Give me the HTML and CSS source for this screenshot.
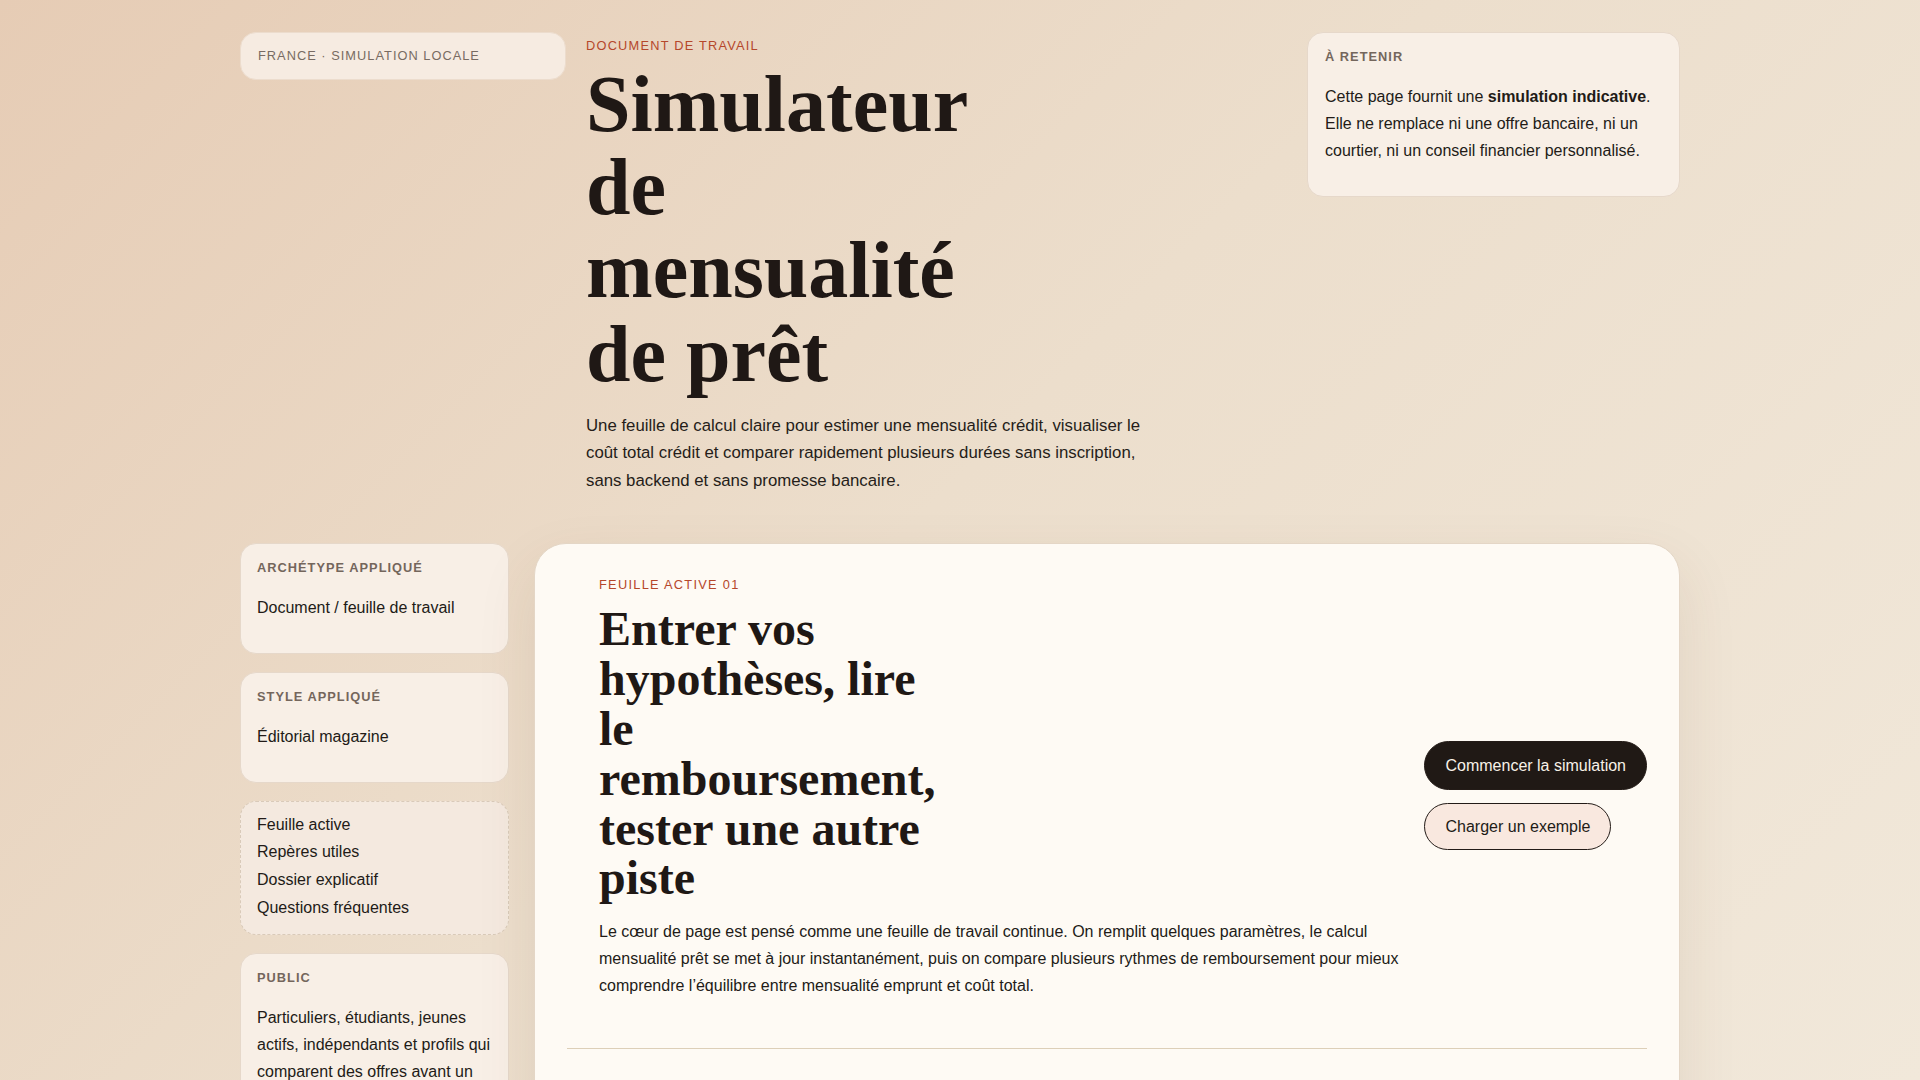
FILE: index.html
```html
<!DOCTYPE html>
<html lang="fr">
<head>
<meta charset="utf-8">
<title>Simulateur de mensualité de prêt</title>
<link rel="stylesheet" href="styles.css">
</head>
<body>
<div class="page">
  <header class="hero">
    <div class="locale-pill">France · Simulation locale</div>
    <div class="hero-main">
      <p class="eyebrow">Document de travail</p>
      <h1 class="hero-title">Simulateur de mensualité de prêt</h1>
      <p class="lede">Une feuille de calcul claire pour estimer une mensualité crédit, visualiser le coût total crédit et comparer rapidement plusieurs durées sans inscription, sans backend et sans promesse bancaire.</p>
    </div>
    <aside class="card note-card">
      <p class="card-label">À retenir</p>
      <p class="card-text">Cette page fournit une <strong>simulation indicative</strong>. Elle ne remplace ni une offre bancaire, ni un courtier, ni un conseil financier personnalisé.</p>
    </aside>
  </header>

  <div class="layout">
    <aside class="sidebar">
      <div class="card">
        <p class="card-label">Archétype appliqué</p>
        <p class="card-text">Document / feuille de travail</p>
      </div>
      <div class="card">
        <p class="card-label">Style appliqué</p>
        <p class="card-text">Éditorial magazine</p>
      </div>
      <nav class="card nav-card">
        <a href="#feuille">Feuille active</a>
        <a href="#reperes">Repères utiles</a>
        <a href="#dossier">Dossier explicatif</a>
        <a href="#faq">Questions fréquentes</a>
      </nav>
      <div class="card">
        <p class="card-label">Public</p>
        <p class="card-text">Particuliers, étudiants, jeunes actifs, indépendants et profils qui comparent des offres avant un rendez-vous bancaire.</p>
      </div>
    </aside>

    <main class="sheet" id="feuille">
      <div class="sheet-head">
        <div class="sheet-intro">
          <p class="eyebrow sheet-eyebrow">Feuille active 01</p>
          <h2 class="sheet-title">Entrer vos hypothèses, lire le remboursement, tester une autre piste</h2>
          <p class="sheet-text">Le cœur de page est pensé comme une feuille de travail continue. On remplit quelques paramètres, le calcul mensualité prêt se met à jour instantanément, puis on compare plusieurs rythmes de remboursement pour mieux comprendre l’équilibre entre mensualité emprunt et coût total.</p>
        </div>
        <div class="actions">
          <button class="btn btn-primary" type="button">Commencer la simulation</button>
          <button class="btn btn-secondary" type="button">Charger un exemple</button>
        </div>
      </div>
      <div class="sheet-body">
        <div class="field">
          <span class="field-label">Montant emprunté</span>
          <span class="field-value">200 000 €</span>
        </div>
        <div class="field">
          <span class="field-label">Taux annuel</span>
          <span class="field-value">3,80 %</span>
        </div>
        <div class="field">
          <span class="field-label">Durée</span>
          <span class="field-value">20 ans</span>
        </div>
      </div>
    </main>
  </div>
</div>
</body>
</html>
```

FILE: styles.css
```css
* { box-sizing: border-box; }

html {
  min-height: 100%;
  background: linear-gradient(135deg, #e6ccb5 0%, #ecdecc 48%, #f1e8da 100%);
  background-attachment: fixed;
}

body {
  margin: 0;
  min-height: 100vh;
  font-family: "Liberation Sans", Arial, sans-serif;
  font-size: 16px;
  color: #221b17;
}

.page {
  max-width: 1440px;
  margin: 0 auto;
  padding: 32px 0 60px;
}

/* ---------- hero ---------- */
.hero {
  display: grid;
  grid-template-columns: 326px 1fr 373px;
  gap: 20px;
  align-items: start;
}

.locale-pill {
  background: #f6ebe1;
  border: 1px solid #ecdccd;
  border-radius: 16px;
  padding: 14px 17px;
  font-size: 12.8px;
  line-height: 18px;
  letter-spacing: 0.08em;
  text-transform: uppercase;
  color: #786b62;
}

.hero-main {
  padding-top: 4px;
}

.eyebrow {
  margin: 0 0 7px;
  font-size: 12.8px;
  line-height: 20px;
  letter-spacing: 0.095em;
  text-transform: uppercase;
  color: #b5472b;
}

.hero-title {
  margin: 0;
  max-width: 420px;
  font-family: "Liberation Serif", "Times New Roman", serif;
  font-weight: 700;
  font-size: 80px;
  line-height: 1.04;
  color: #1f1815;
}

.lede {
  margin: 16px 0 0;
  max-width: 36rem;
  font-size: 16.8px;
  line-height: 1.63;
  color: #251d19;
}

/* ---------- cards ---------- */
.card {
  background: #f8efe6;
  border: 1px solid #e6d8ca;
  border-radius: 16px;
  padding: 15px 16px 16px;
}

.note-card {
  padding-left: 17px;
  padding-right: 17px;
}

.card-label {
  margin: 0;
  font-size: 12.8px;
  line-height: 18px;
  font-weight: 700;
  letter-spacing: 0.08em;
  text-transform: uppercase;
  color: #74665c;
}

.card-text {
  margin: 18px 0 15px;
  line-height: 1.68;
}

/* ---------- layout ---------- */
.layout {
  display: grid;
  grid-template-columns: 269px 1fr;
  gap: 25px;
  margin-top: 49px;
  align-items: start;
}

.sidebar {
  display: flex;
  flex-direction: column;
  gap: 18px;
}

.nav-card {
  display: flex;
  flex-direction: column;
  background: #f4e9df;
  border: 1px dashed #d9cab9;
  padding: 9px 16px 12px;
}

.nav-card a {
  color: #221b17;
  text-decoration: none;
  line-height: 27.8px;
}

/* ---------- sheet ---------- */
.sheet {
  background: #fefaf4;
  border: 1px solid #e4d6c6;
  border-radius: 32px;
  padding: 32px;
  box-shadow: 0 24px 60px rgba(96, 62, 30, 0.10);
}

.sheet-head {
  display: grid;
  grid-template-columns: 1fr auto;
  gap: 24px;
  align-items: center;
  padding: 0 0 32px 32px;
  border-bottom: 1px solid #ddcfb8;
}

.sheet-eyebrow {
  margin-bottom: 10px;
  line-height: 18px;
  letter-spacing: 0.1em;
}

.sheet-title {
  margin: 0;
  max-width: 350px;
  font-family: "Liberation Serif", "Times New Roman", serif;
  font-weight: 700;
  font-size: 48px;
  line-height: 1.04;
  color: #1f1815;
}

.sheet-text {
  margin: 16px 0 16px;
  line-height: 1.68;
}

.actions {
  display: flex;
  flex-direction: column;
  align-items: flex-start;
  gap: 13px;
}

.btn {
  font-family: "Liberation Sans", Arial, sans-serif;
  font-size: 16px;
  line-height: 19px;
  border-radius: 999px;
  border: 1px solid #231b17;
  padding: 14px 20px;
  cursor: pointer;
}

.btn-primary {
  background: #201915;
  color: #f8f1e8;
}

.btn-secondary {
  background: #f9e8df;
  color: #221b17;
  padding: 13px 20px;
}

.sheet-body {
  display: grid;
  grid-template-columns: repeat(3, 1fr);
  gap: 20px;
  padding: 32px 0 0 32px;
}

.field {
  display: flex;
  flex-direction: column;
  gap: 8px;
  padding: 16px;
  border: 1px solid #e4d6c6;
  border-radius: 14px;
}

.field-label {
  font-size: 12.8px;
  font-weight: 700;
  letter-spacing: 0.08em;
  text-transform: uppercase;
  color: #74665c;
}

.field-value {
  font-size: 20px;
}
```
